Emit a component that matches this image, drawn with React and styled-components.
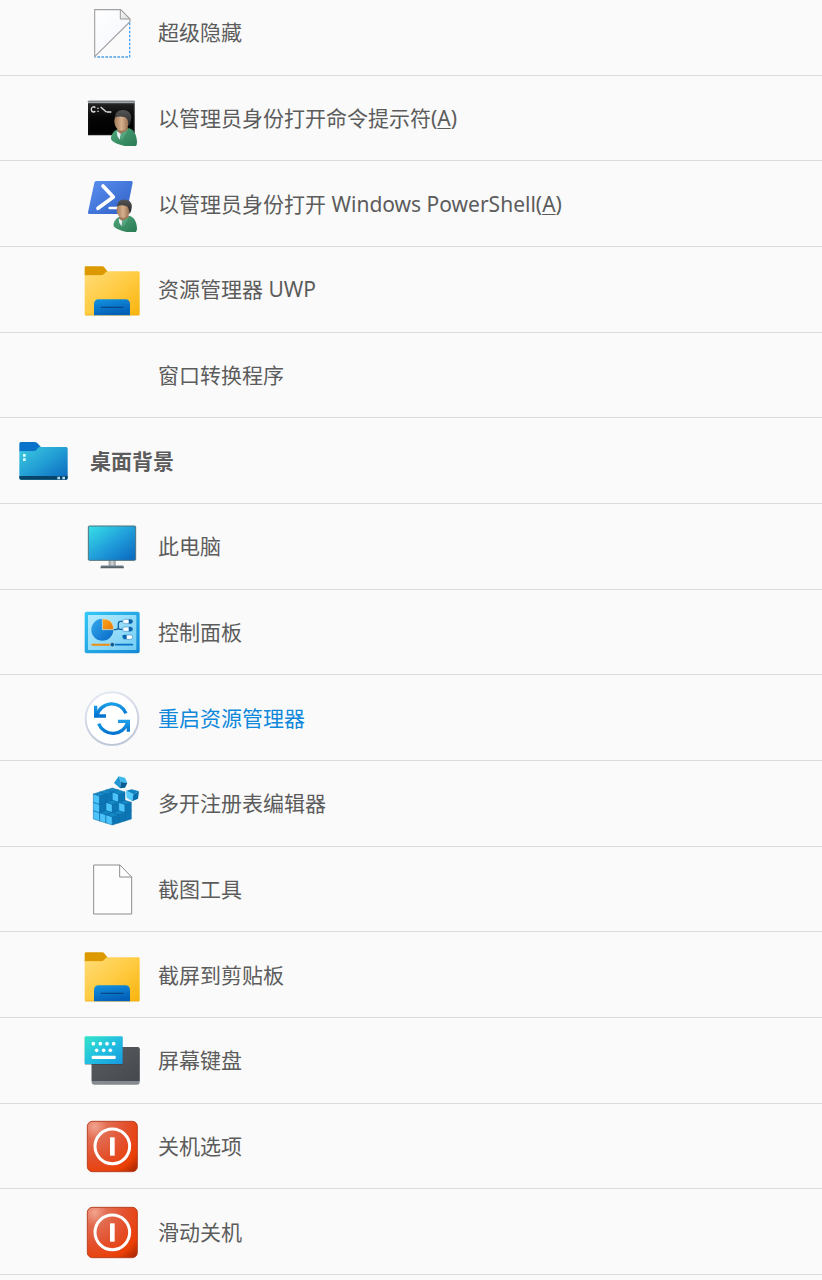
import React from "react";
import styled, { createGlobalStyle } from "styled-components";

const GlobalStyle = createGlobalStyle`
  *, *::before, *::after { box-sizing: border-box; }
  body {
    margin: 0;
    background: #fafafa;
    font-family: "Noto Sans", "Noto Sans CJK SC", sans-serif;
  }
`;

/* The list starts slightly above the window, as when it has been scrolled. */
const MenuList = styled.ul`
  display: grid;
  grid-auto-rows: minmax(80px, 1fr);
  min-height: calc(100vh + 5px);
  margin: -10px 0 5px;
  padding: 0;
  list-style: none;
`;

const MenuItem = styled.li`
  display: flex;
  border-bottom: 1px solid #dcdcdc;
`;

const MenuButton = styled.button`
  display: flex;
  flex: 1;
  align-items: center;
  gap: 18px;
  min-width: 0;
  padding: 0 16px 0 ${(p) => (p.$group ? "16px" : "84px")};
  border: 0;
  background: transparent;
  color: ${(p) => (p.$active ? "#0f88da" : "#5c5c5c")};
  font: inherit;
  font-size: 21px;
  font-weight: ${(p) => (p.$group ? 700 : 400)};
  line-height: 28px;
  text-align: left;
  cursor: pointer;
`;

const IconSlot = styled.span`
  display: block;
  flex: none;
  width: 56px;
  height: 56px;
`;

const IconSvg = styled.svg`
  display: block;
  width: 56px;
  height: 56px;
`;

const GradientDefs = styled.svg`
  position: absolute;
`;

const Label = styled.span`
  min-width: 0;
`;

const AccessKey = styled.u`
  text-decoration-thickness: 1px;
  text-underline-offset: 2px;
`;

function Icon({ viewBox, children }) {
  return (
    <IconSvg viewBox={viewBox} aria-hidden="true">
      {children}
    </IconSvg>
  );
}

function Gradient({ id, from, to, mid, x2 = 1, y2 = 1 }) {
  return (
    <linearGradient id={id} x1="0" y1="0" x2={x2} y2={y2}>
      <stop offset="0" stopColor={from} />
      {mid && <stop offset=".5" stopColor={mid} />}
      <stop offset="1" stopColor={to} />
    </linearGradient>
  );
}

function SharedGradients() {
  return (
    <GradientDefs width="0" height="0" aria-hidden="true">
      <defs>
        <Gradient id="paper" from="#ffffff" to="#f1f5fb" />
        <Gradient id="fold" from="#ffffff" to="#d9d9d9" />
        <Gradient id="console" from="#262626" mid="#050505" to="#000000" x2={0} />
        <Gradient id="skin" from="#a37c5a" mid="#d6b08e" to="#93694a" y2={0} />
        <Gradient id="shirt" from="#4fa67a" to="#2a7a54" />
        <Gradient id="hair" from="#555555" to="#242424" x2={0} />
        <Gradient id="shell" from="#5a90f0" to="#2f5fc4" />
        <Gradient id="folder" from="#ffdc76" mid="#ffcb42" to="#f8b30d" />
        <Gradient id="dock" from="#1494e0" to="#0360b8" x2={0.4} />
        <Gradient id="desk" from="#3ccbe0" mid="#229dd4" to="#0a67bd" />
        <Gradient id="screen" from="#38e0e6" mid="#219fdb" to="#0865bd" />
        <Gradient id="metal" from="#8d9399" mid="#d3d6d9" to="#8d9399" y2={0} />
        <Gradient id="panelEdge" from="#35c8f5" to="#1489d6" />
        <Gradient id="panel" from="#b5ebff" to="#74cdf2" />
        <Gradient id="pie" from="#35a9ee" to="#0568c4" />
        <Gradient id="slice" from="#ffa51f" to="#e67a08" />
        <Gradient id="ring" from="#e7ebf4" to="#bfc8d9" x2={0.3} />
        <Gradient id="arrow" from="#1d9de8" to="#0473cf" x2={0} />
        <Gradient id="keys" from="#33e6c8" mid="#22bfe0" to="#1799df" />
        <Gradient id="slate" from="#5a5d61" to="#45484c" />
        <radialGradient id="power" cx=".15" cy=".1" r="1.15">
          <stop offset="0" stopColor="#f2a48f" />
          <stop offset=".22" stopColor="#e26c50" />
          <stop offset=".55" stopColor="#e3502c" />
          <stop offset=".85" stopColor="#ea3f05" />
          <stop offset="1" stopColor="#b52c04" />
        </radialGradient>
      </defs>
    </GradientDefs>
  );
}

const HiddenFileIcon = () => (
  <Icon viewBox="42 10 168 168">
    <path d="M74 27H152L180 55V63L74 168Z" fill="url(#paper)" stroke="#a3a3a3" strokeWidth="3.5" />
    <path d="M151 27V55H180Z" fill="url(#fold)" stroke="#999" strokeWidth="3" />
    <path d="M179 66V169H76" fill="none" stroke="#4aa3ee" strokeWidth="4" strokeDasharray="8 4" />
  </Icon>
);

const Person = () => (
  <>
    <path d="M123 409C126 395 136 385 148 383L178 382C192 387 200 402 201 422Q202 434 194 437Q174 439 153 432Q127 425 123 415Z" fill="url(#shirt)" />
    <path d="M140 391L153 395L149 416L142 405Z" fill="#e9f1f5" />
    <path d="M153 396L176 383L160 412L151 420Z" fill="#6bb592" opacity=".5" />
    <path d="M143 377H174L172 388L151 398L142 391Z" fill="#a07858" />
    <ellipse cx="155" cy="361" rx="22" ry="28" fill="url(#skin)" />
    <path d="M134 350Q136 328 158 327Q183 327 184 351Q183 366 176 376Q175 352 165 349Q149 343 134 350Z" fill="url(#hair)" />
  </>
);

const CommandPromptIcon = () => (
  <Icon viewBox="42 267 168 168">
    <rect x="54" y="299" width="140" height="104" rx="2" fill="url(#console)" />
    <path d="M54 301H194V307H54Z" fill="#a2a7ad" />
    <path d="M57 310H191V400H57Z" fill="none" stroke="#3a3a3a" strokeWidth="1" />
    <path d="M76 320Q72 316 68 318Q63 320 64 326Q65 333 70 333Q74 333 76 331M84 320V324M84 329V333M92 318L109 333M110 333H124" fill="none" stroke="#dedede" strokeWidth="4" />
    <Person />
  </Icon>
);

const PowerShellIcon = () => (
  <Icon viewBox="42 30 168 168">
    <path d="M79 45H184Q189 45 188 50L170 139Q169 144 164 144H57Q53 144 54 139L73 50Q74 45 79 45Z" fill="url(#shell)" />
    <path d="M99 60L130 93L84 127" fill="none" stroke="#fff" strokeWidth="11" strokeLinecap="round" strokeLinejoin="round" />
    <path d="M119 126H148" stroke="#fff" strokeWidth="8" strokeLinecap="round" />
    <g transform="translate(20 -194) scale(.9)">
      <Person />
    </g>
  </Icon>
);

const ExplorerIcon = () => (
  <Icon viewBox="42 287 168 168">
    <path d="M44 307Q44 303 48 303H96Q101 303 104 307L114 320L104 331H44Z" fill="#dc9a00" />
    <path d="M44 330H92Q98 330 102 326L108 320Q110 318 114 318H205Q209 318 209 322V446Q209 450 205 450H48Q44 450 44 446Z" fill="url(#folder)" />
    <path d="M46 449H208" stroke="#e7a913" strokeWidth="2" />
    <path d="M72 450V417Q72 402 87 402H165Q180 402 180 417V450Z" fill="url(#dock)" />
    <path d="M94 426H159" stroke="#064683" strokeWidth="4" strokeLinecap="round" />
  </Icon>
);

const DesktopIcon = () => (
  <Icon viewBox="48 21 168 168">
    <path d="M58 53Q58 48 63 48H104Q110 48 114 53L123 64L112 77H58Z" fill="#0873c9" />
    <path d="M58 76H99Q106 76 109 72L114 66Q116 63 121 63H199Q203 63 203 68V156Q203 161 198 161H63Q58 161 58 156Z" fill="url(#desk)" />
    <path d="M58 150H203V156Q203 161 198 161H63Q58 161 58 156Z" fill="#064568" />
    <path d="M69 84H77V92H69ZM69 97H77V105H69Z" fill="#dcffff" />
    <path d="M172 152H180V160H172ZM187 152H195V160H187Z" fill="#b8dcf0" />
  </Icon>
);

const ComputerIcon = () => (
  <Icon viewBox="252 278 168 168">
    <path d="M326 404H347V424H326Z" fill="url(#metal)" />
    <rect x="265" y="302" width="142" height="103" rx="3" fill="url(#screen)" stroke="#50717f" strokeWidth="3" />
    <path d="M303 421H370L372 429H301Z" fill="#58626a" />
    <path d="M304 422H369" stroke="#8c969c" strokeWidth="2" />
  </Icon>
);

const ControlPanelIcon = () => (
  <Icon viewBox="42 26 168 168">
    <rect x="44" y="49" width="165" height="125" rx="6" fill="url(#panelEdge)" />
    <rect x="54" y="59" width="145" height="105" rx="2" fill="url(#panel)" />
    <circle cx="97" cy="103" r="33" fill="url(#pie)" />
    <path d="M97 70V103H131Q131 70 97 70Z" fill="url(#slice)" stroke="#cceefb" strokeWidth="2" />
    <path d="M131 103H137Q145 103 145 96V85Q145 78 152 78H159M145 96Q145 102 150 102H159" fill="none" stroke="#11609f" strokeWidth="4" />
    {[78, 101, 125].map((y) => (
      <g key={y}>
        <rect x="158" y={y - 6} width="30" height="13" rx="6" fill="#fff" stroke="#3b94d0" strokeWidth="2" />
        {y === 125 ? (
          <path d="M158 119H170V131H164Q158 131 158 125Z" fill="#0a63ad" />
        ) : (
          <path d={`M176 ${y - 6}H182Q188 ${y - 5} 188 ${y}Q188 ${y + 6} 182 ${y + 7}H176Z`} fill="#0a63ad" />
        )}
      </g>
    ))}
    <path d="M67 148H120" stroke="#f08c12" strokeWidth="6" strokeLinecap="round" />
    <path d="M133 148H187" stroke="#0871c7" strokeWidth="5" strokeLinecap="round" />
    <circle cx="127" cy="148" r="7" fill="#105b92" stroke="#c7edfa" strokeWidth="2" />
  </Icon>
);

const RestartIcon = () => (
  <Icon viewBox="42 283 168 168">
    <circle cx="126" cy="369" r="79" fill="#fff" stroke="url(#ring)" strokeWidth="6" />
    <g fill="none" stroke="url(#arrow)" strokeWidth="10">
      <path d="M168 353A46 46 0 0 0 81 359" />
      <path d="M77 330V361H108" />
      <path d="M86 384A46 46 0 0 0 173 380" />
      <path d="M144 377H175V408" />
    </g>
  </Icon>
);

/* One block of the registry cube; x and y are its front bottom corner. */
function Block({ x, y }) {
  return (
    <g stroke="#0b6ba6" strokeWidth="1.5" strokeLinejoin="round">
      <path d={`M${x} ${y}l-19 -6v-25l19 6Z`} fill="#4cc4fa" />
      <path d={`M${x} ${y}l19 -6v-25l-19 6Z`} fill="#0c75b3" />
      <path d={`M${x} ${y - 25}l-19 -6l19 -6l19 6Z`} fill="#1489c6" />
    </g>
  );
}

/* Block heights, from the back left to the front right. */
const stacks = [
  [2, 2, 3], [2, 1, 3], [2, 0, 3],
  [1, 2, 3], [1, 1, 2], [1, 0, 1],
  [0, 2, 2], [0, 1, 1], [0, 0, 1],
];

const RegistryIcon = () => (
  <Icon viewBox="42 30 168 168">
    {stacks.map(([left, right, height]) =>
      Array.from({ length: height }, (_, level) => (
        <Block
          key={`${left}${right}${level}`}
          x={127 + 19 * (right - left)}
          y={180 - 6 * (right + left) - 25 * level}
        />
      ))
    )}
    <path d="M146 34L165 38L172 54L153 51Z" fill="#3fb9ee" />
    <path d="M146 34L153 51L150 70L132 54Z" fill="#2197d5" />
    <path d="M153 51L172 54L165 68L150 70Z" fill="#075d95" />
    <path d="M168 77L185 73L207 79L190 88Z" fill="#1286c3" />
    <path d="M168 77L190 88L187 109L170 99Z" fill="#55ccff" />
    <path d="M190 88L207 79L204 101L187 109Z" fill="#0871ad" />
  </Icon>
);

const BlankFileIcon = () => (
  <Icon viewBox="42 287 168 168">
    <path d="M71 299H150L185 335V446H71Z" fill="#fdfdfd" stroke="#8d8d8d" strokeWidth="3" />
    <path d="M149 299V335H185" fill="none" stroke="#8d8d8d" strokeWidth="3" />
  </Icon>
);

const KeyboardIcon = () => (
  <Icon viewBox="42 291 168 168">
    <rect x="65" y="336" width="144" height="113" rx="7" fill="#858a90" />
    <path d="M65 343Q65 336 72 336H202Q209 336 209 343V438H65Z" fill="url(#slate)" />
    <rect x="44" y="306" width="114" height="84" rx="3" fill="#303336" opacity=".35" />
    <rect x="44" y="304" width="114" height="83" rx="3" fill="url(#keys)" />
    <g fill="#fff">
      {[70, 91, 111, 131].map((x) => (
        <circle key={x} cx={x} cy="326" r="5.5" />
      ))}
      {[80, 101, 121].map((x) => (
        <circle key={x} cx={x} cy="346" r="5.5" />
      ))}
      <rect x="65" y="362" width="72" height="10" rx="3" />
    </g>
  </Icon>
);

const PowerIcon = () => (
  <Icon viewBox="42 39 168 168">
    <rect x="52" y="49" width="150" height="151" rx="15" fill="url(#power)" stroke="#b94327" strokeWidth="3" />
    <circle cx="127" cy="124" r="52" fill="none" stroke="#fff" strokeWidth="9" />
    <path d="M127 97V152" stroke="#fff" strokeWidth="14" />
  </Icon>
);

const items = [
  { icon: HiddenFileIcon, label: "超级隐藏" },
  { icon: CommandPromptIcon, label: "以管理员身份打开命令提示符", accessKey: "A" },
  { icon: PowerShellIcon, label: "以管理员身份打开 Windows PowerShell", accessKey: "A" },
  { icon: ExplorerIcon, label: "资源管理器 UWP" },
  { label: "窗口转换程序" },
  { icon: DesktopIcon, label: "桌面背景", group: true },
  { icon: ComputerIcon, label: "此电脑" },
  { icon: ControlPanelIcon, label: "控制面板" },
  { icon: RestartIcon, label: "重启资源管理器", active: true },
  { icon: RegistryIcon, label: "多开注册表编辑器" },
  { icon: BlankFileIcon, label: "截图工具" },
  { icon: ExplorerIcon, label: "截屏到剪贴板" },
  { icon: KeyboardIcon, label: "屏幕键盘" },
  { icon: PowerIcon, label: "关机选项" },
  { icon: PowerIcon, label: "滑动关机" },
];

export default function App() {
  return (
    <>
      <GlobalStyle />
      <SharedGradients />
      <MenuList lang="zh-CN">
        {items.map(({ icon: Glyph, label, accessKey, group, active }) => (
          <MenuItem key={label}>
            <MenuButton type="button" $group={group} $active={active}>
              <IconSlot>{Glyph && <Glyph />}</IconSlot>
              <Label>
                {label}
                {accessKey && (
                  <>
                    (<AccessKey>{accessKey}</AccessKey>)
                  </>
                )}
              </Label>
            </MenuButton>
          </MenuItem>
        ))}
      </MenuList>
    </>
  );
}
